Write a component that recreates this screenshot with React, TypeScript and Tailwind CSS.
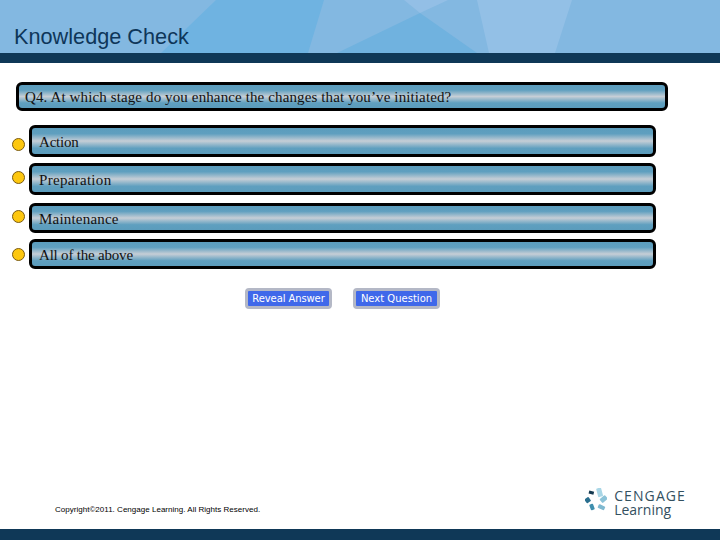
import React from 'react';

const options = [
  { label: 'Action', bar: 'h-[32px]', dot: 'mt-[13px]', gap: 'mb-[6px]', track: 'tracking-[-0.2px]' },
  { label: 'Preparation', bar: 'h-[32px]', dot: 'mt-[8px]', gap: 'mb-[8px]', track: 'tracking-[0.3px]' },
  { label: 'Maintenance', bar: 'h-[30px]', dot: 'mt-[7px]', gap: 'mb-[6px]', track: 'tracking-[0.2px]' },
  { label: 'All of the above', bar: 'h-[30px]', dot: 'mt-[9px]', gap: 'mb-0', track: 'tracking-[-0.2px]' },
];

const barGradient =
  'bg-[linear-gradient(180deg,#5b9cbc_0%,#5f9fbf_22%,#c6ced6_50%,#5f9fbf_78%,#5b9cbc_100%)]';

function Header() {
  return (
    <div className="relative h-[53px] bg-[#83b8e1] overflow-hidden">
      <svg className="absolute inset-0" width="720" height="53" viewBox="0 0 720 53">
        <polygon points="216,0 324,0 308,53 161,53" fill="#6fb3e1" />
        <polygon points="404,0 448,0 420,13" fill="#93bfe6" />
        <polygon points="420,13 337,53 477,53" fill="#70b2df" />
        <polygon points="477,0 572,0 555,53 489,53" fill="#93c0e6" />
      </svg>
      <h1 className="relative pl-[14px] pt-[23px] text-[21.7px] leading-[28px] text-[#0e3659] font-['Liberation_Sans',sans-serif]">
        Knowledge Check
      </h1>
    </div>
  );
}

function Logo() {
  return (
    <div className="flex items-start gap-[7px]">
      <svg width="22" height="29" viewBox="0 0 22 29">
        <rect x="12" y="0" width="5" height="9" rx="1" fill="#a9d6e6" transform="rotate(-15 14 4)" />
        <rect x="4" y="3" width="5" height="3" fill="#14384f" transform="rotate(15 6 4)" />
        <rect x="15" y="9" width="7" height="5" rx="1" fill="#8cc3d8" transform="rotate(-40 18 11)" />
        <rect x="0" y="10" width="5" height="5" rx="1" fill="#2a6f8f" transform="rotate(-35 2 12)" />
        <rect x="5" y="16" width="4" height="6" rx="1" fill="#3f8fae" transform="rotate(-20 7 19)" />
        <rect x="13" y="17" width="7" height="4" rx="1" fill="#7fb9d0" transform="rotate(25 16 19)" />
      </svg>
      <div className="flex flex-col text-[#33505f] font-['Open_Sans',sans-serif]">
        <span className="text-[14px] leading-[15px] tracking-[1.1px]">CENGAGE</span>
        <span className="text-[14px] leading-[14px]">Learning</span>
      </div>
    </div>
  );
}

export default function App() {
  return (
    <div className="flex flex-col w-[720px] h-[540px] bg-white overflow-hidden">
      <Header />
      <div className="h-[10px] bg-[#0f3857]" />

      <div className="flex-1 flex flex-col pl-[12px] font-['Liberation_Serif',serif] text-[15px] text-[#111]">
        <div className={`mt-[19px] ml-[4px] w-[652px] h-[29px] flex items-center pl-[6px] pt-[2px] border-[3px] border-black rounded-[6px] ${barGradient}`}>
          <span className="tracking-[0.12px]">Q4. At which stage do you enhance the changes that you’ve initiated?</span>
        </div>

        <div className="mt-[14px] flex flex-col">
          {options.map(o => (
            <div key={o.label} className={`flex items-start ${o.gap}`}>
              <div className={`w-[13px] h-[13px] rounded-full bg-[#fdc70f] border border-[#7a5a10] ${o.dot}`} />
              <div className={`ml-[4px] w-[627px] ${o.bar} flex items-center pl-[7px] pt-[2px] border-[3px] border-black rounded-[6px] ${barGradient}`}>
                <span className={o.track}>{o.label}</span>
              </div>
            </div>
          ))}
        </div>

        <div className="mt-[19px] ml-[233px] flex gap-[21px] font-['DejaVu_Sans',sans-serif]">
          <button className="w-[87px] h-[21px] flex items-center justify-center bg-[#3f68ea] border-[3px] border-[#b4b8c6] rounded-[4px] text-white text-[10px] tracking-[-0.1px]">
            Reveal Answer
          </button>
          <button className="w-[87px] h-[21px] flex items-center justify-center bg-[#3f68ea] border-[3px] border-[#b4b8c6] rounded-[4px] text-white text-[10px]">
            Next Question
          </button>
        </div>

        <div className="mt-auto mb-[12px] flex items-end justify-between pr-[34px]">
          <p className="ml-[43px] mb-[2px] text-[8px] leading-[10px] tracking-[0.02px] text-black font-['Liberation_Sans',sans-serif]">
            Copyright©2011. Cengage Learning. All Rights Reserved.
          </p>
          <Logo />
        </div>
      </div>

      <div className="h-[11px] bg-[#0f3857]" />
    </div>
  );
}
